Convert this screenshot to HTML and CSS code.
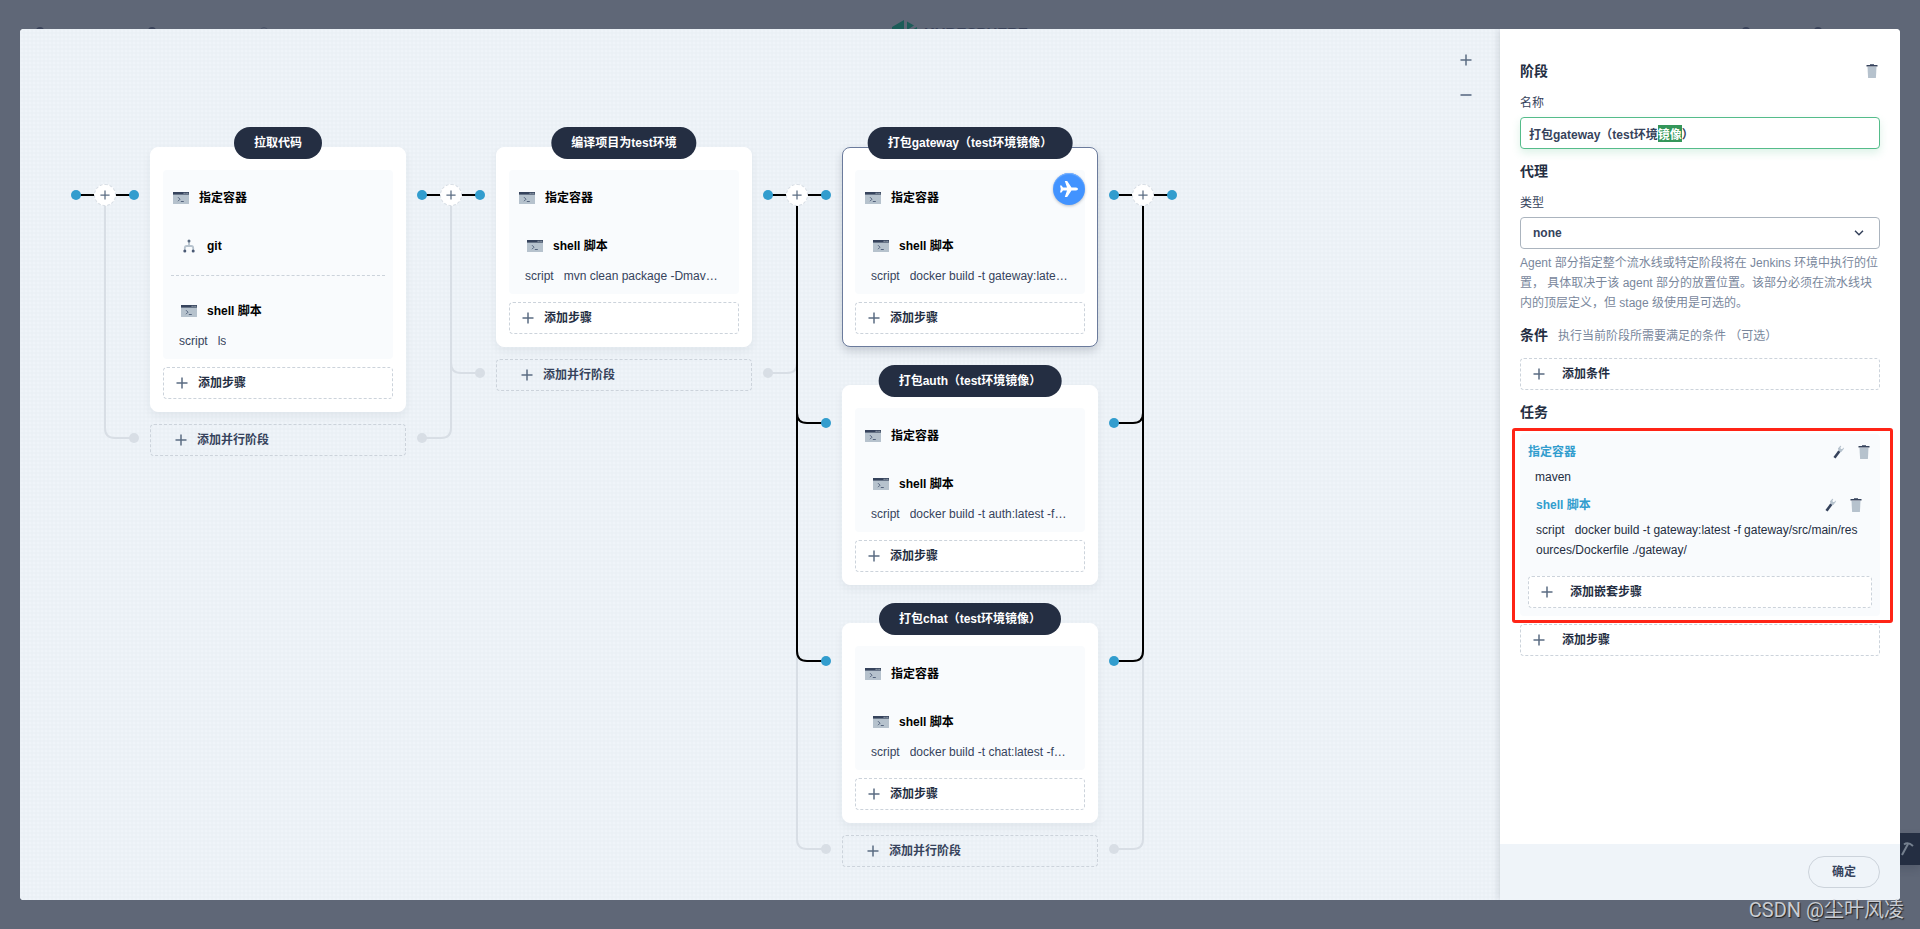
FILE: index.html
```
<!DOCTYPE html>
<html lang="zh-CN">
<head>
<meta charset="utf-8">
<title>流水线编辑</title>
<link rel="stylesheet" href="styles.css">
</head>
<body>
<svg class="defs" aria-hidden="true">
  <symbol id="i-terminal" viewBox="0 0 16 12">
    <rect width="16" height="12" rx="0.5" fill="#b6c2cd"/>
    <rect width="16" height="2.600" fill="#36435c"/>
    <path d="M10.600 1.300h1.100M12.500 1.300h1.100M14.300 1.300h1" stroke="#b6c2cd" stroke-width="1"/>
    <path d="M5 5.200l2 2-2 2M7.800 9.500h3" fill="none" stroke="#4a5974" stroke-width="0.900"/>
  </symbol>
  <symbol id="i-git" viewBox="0 0 12 14">
    <path d="M6 2v5M1.800 12V9Q1.800 7 3.800 7h4.400Q10.200 7 10.200 9v3" fill="none" stroke="#b6c2cd" stroke-width="1.800"/>
    <circle cx="6" cy="2" r="1.500" fill="#5a6b82"/><circle cx="1.800" cy="12" r="1.500" fill="#4a5974"/><circle cx="10.200" cy="12" r="1.500" fill="#4a5974"/>
  </symbol>
  <symbol id="i-plus" viewBox="0 0 12 12"><path d="M6 0.500v11M0.500 6h11" stroke="#5b6c82" stroke-width="1.500"/></symbol>
  <symbol id="i-minus" viewBox="0 0 12 12"><path d="M0.500 6h11" stroke="#79879c" stroke-width="2"/></symbol>
  <symbol id="i-trash" viewBox="0 0 12 14">
    <path d="M1.500 3h9l-.6 11H2.100z" fill="#b6c2cd"/><path d="M.5 1H4V.2h4V1h3.500v1.500H.5z" fill="#36435c"/>
  </symbol>
  <symbol id="i-wrench" viewBox="0 0 12 14">
    <path d="M6.800 6L5.900 3.600 8.300.8 9.300 1 8.300 3l.8 1.100 1.200-.1L11.500 2.400l.4 1.300-2.600 3.200-1.500.4z" fill="#b6c2cd"/>
    <path d="M7.300 6.300L2.500 12.700" stroke="#36435c" stroke-width="2.600"/>
  </symbol>
</svg>

<header class="topbar" aria-hidden="true">
  <div class="topnav"><i class="nub"></i><i class="nub"></i><i class="nub ring"></i></div>
  <div class="brand">
    <svg width="26" height="28" viewBox="0 0 26 28"><path d="M0 7L12 0v14L0 21zM15 1.500l7 4-7 4.500zM25 7v6l-7-2z" fill="#1c5c58"/></svg>
    <span>KUBESPHERE</span>
  </div>
  <div class="topuser"><i class="nub"></i><i class="nub"></i></div>
</header>
<div class="toolbox" aria-hidden="true"><svg width="14" height="16" viewBox="0 0 14 16"><path d="M2 14L8 3" stroke="#75808f" stroke-width="2"/><path d="M4 3.500Q8 .5 13 5" fill="none" stroke="#75808f" stroke-width="2"/></svg></div>

<main class="modal">
  <section class="canvas" aria-label="流水线">
    <div class="zoom">
      <button type="button" aria-label="放大"><svg width="12" height="12"><use href="#i-plus"/></svg></button>
      <button type="button" aria-label="缩小"><svg width="12" height="12"><use href="#i-minus"/></svg></button>
    </div>
    <div class="pipeline">
      <div class="link">
        <svg width="68" height="710">
          <path class="idle" d="M34 59V281Q34 291 44 291H63"/><path class="live" d="M5 48H63"/>
          <circle class="off" cx="63" cy="291" r="5"/><circle class="on" cx="5" cy="48" r="5"/><circle class="on" cx="63" cy="48" r="5"/>
        </svg>
        <button type="button" class="insert" aria-label="添加阶段"><svg width="10" height="10"><use href="#i-plus"/></svg></button>
      </div>

      <div class="lane">
        <article class="stage">
          <h2 class="pill">拉取代码</h2>
          <div class="steps">
            <h3 class="step"><svg width="16" height="12"><use href="#i-terminal"/></svg>指定容器</h3>
            <div class="nested">
              <h3 class="step"><svg class="git" width="12" height="14"><use href="#i-git"/></svg>git</h3>
            </div>
            <div class="nested divided">
              <h3 class="step"><svg width="16" height="12"><use href="#i-terminal"/></svg>shell 脚本</h3>
              <p class="script"><span>script</span><span class="value">ls</span></p>
            </div>
          </div>
          <button type="button" class="add"><svg width="12" height="12"><use href="#i-plus"/></svg>添加步骤</button>
        </article>
        <button type="button" class="add parallel"><svg width="12" height="12"><use href="#i-plus"/></svg>添加并行阶段</button>
      </div>

      <div class="link">
        <svg width="68" height="710">
          <path class="idle" d="M34 59V281Q34 291 24 291H5M34 59V216Q34 226 44 226H63"/><path class="live" d="M5 48H63"/>
          <circle class="off" cx="5" cy="291" r="5"/><circle class="off" cx="63" cy="226" r="5"/><circle class="on" cx="5" cy="48" r="5"/><circle class="on" cx="63" cy="48" r="5"/>
        </svg>
        <button type="button" class="insert" aria-label="添加阶段"><svg width="10" height="10"><use href="#i-plus"/></svg></button>
      </div>

      <div class="lane">
        <article class="stage">
          <h2 class="pill">编译项目为test环境</h2>
          <div class="steps">
            <h3 class="step"><svg width="16" height="12"><use href="#i-terminal"/></svg>指定容器</h3>
            <div class="nested">
              <h3 class="step"><svg width="16" height="12"><use href="#i-terminal"/></svg>shell 脚本</h3>
              <p class="script"><span>script</span><span class="value">mvn clean package -Dmaven.test.skip=true</span></p>
            </div>
          </div>
          <button type="button" class="add"><svg width="12" height="12"><use href="#i-plus"/></svg>添加步骤</button>
        </article>
        <button type="button" class="add parallel"><svg width="12" height="12"><use href="#i-plus"/></svg>添加并行阶段</button>
      </div>

      <div class="link">
        <svg width="68" height="710">
          <path class="idle" d="M34 59V216Q34 226 24 226H5M34 59V692Q34 702 44 702H63"/>
          <path class="live" d="M5 48H63M34 59V266Q34 276 44 276H63M34 59V504Q34 514 44 514H63"/>
          <circle class="off" cx="5" cy="226" r="5"/><circle class="off" cx="63" cy="702" r="5"/><circle class="on" cx="5" cy="48" r="5"/><circle class="on" cx="63" cy="48" r="5"/><circle class="on" cx="63" cy="276" r="5"/><circle class="on" cx="63" cy="514" r="5"/>
        </svg>
        <button type="button" class="insert" aria-label="添加阶段"><svg width="10" height="10"><use href="#i-plus"/></svg></button>
      </div>

      <div class="lane">
        <article class="stage selected">
          <h2 class="pill">打包gateway（test环境镜像）</h2>
          <span class="plane"><svg width="20" height="18" viewBox="0 0 20 18"><path d="M1 5.500h1.500L4 7.500h4L5.800 1h2.400l4.300 6.500H17q2 .3 2 1.500t-2 1.500h-4.500L8.200 17H5.800L8 10.500H4L2.500 12.500H1L1.800 9z" fill="#fff"/></svg></span>
          <div class="steps">
            <h3 class="step"><svg width="16" height="12"><use href="#i-terminal"/></svg>指定容器</h3>
            <div class="nested">
              <h3 class="step"><svg width="16" height="12"><use href="#i-terminal"/></svg>shell 脚本</h3>
              <p class="script"><span>script</span><span class="value">docker build -t gateway:latest -f gateway/src/main/resources/Dockerfile ./gateway/</span></p>
            </div>
          </div>
          <button type="button" class="add"><svg width="12" height="12"><use href="#i-plus"/></svg>添加步骤</button>
        </article>
        <article class="stage">
          <h2 class="pill">打包auth（test环境镜像）</h2>
          <div class="steps">
            <h3 class="step"><svg width="16" height="12"><use href="#i-terminal"/></svg>指定容器</h3>
            <div class="nested">
              <h3 class="step"><svg width="16" height="12"><use href="#i-terminal"/></svg>shell 脚本</h3>
              <p class="script"><span>script</span><span class="value">docker build -t auth:latest -f auth/src/main/resources/Dockerfile ./auth/</span></p>
            </div>
          </div>
          <button type="button" class="add"><svg width="12" height="12"><use href="#i-plus"/></svg>添加步骤</button>
        </article>
        <article class="stage">
          <h2 class="pill">打包chat（test环境镜像）</h2>
          <div class="steps">
            <h3 class="step"><svg width="16" height="12"><use href="#i-terminal"/></svg>指定容器</h3>
            <div class="nested">
              <h3 class="step"><svg width="16" height="12"><use href="#i-terminal"/></svg>shell 脚本</h3>
              <p class="script"><span>script</span><span class="value">docker build -t chat:latest -f chat/src/main/resources/Dockerfile ./chat/</span></p>
            </div>
          </div>
          <button type="button" class="add"><svg width="12" height="12"><use href="#i-plus"/></svg>添加步骤</button>
        </article>
        <button type="button" class="add parallel"><svg width="12" height="12"><use href="#i-plus"/></svg>添加并行阶段</button>
      </div>

      <div class="link">
        <svg width="68" height="710">
          <path class="idle" d="M34 59V692Q34 702 24 702H5"/>
          <path class="live" d="M5 48H63M34 59V266Q34 276 24 276H5M34 59V504Q34 514 24 514H5"/>
          <circle class="off" cx="5" cy="702" r="5"/><circle class="on" cx="5" cy="48" r="5"/><circle class="on" cx="63" cy="48" r="5"/><circle class="on" cx="5" cy="276" r="5"/><circle class="on" cx="5" cy="514" r="5"/>
        </svg>
        <button type="button" class="insert" aria-label="添加阶段"><svg width="10" height="10"><use href="#i-plus"/></svg></button>
      </div>
    </div>
  </section>

  <form class="panel">
    <div class="panel-body">
      <div class="row">
        <h2 class="title">阶段</h2>
        <button type="button" class="icon" aria-label="删除阶段"><svg width="12" height="14"><use href="#i-trash"/></svg></button>
      </div>
      <label class="label" for="name">名称</label>
      <input class="field" id="name" type="text" value="打包gateway（test环境镜像）">
      <h2 class="title">代理</h2>
      <label class="label" for="kind">类型</label>
      <div class="select">
        <select class="field" id="kind"><option>none</option></select>
        <svg width="10" height="6" viewBox="0 0 10 6"><path d="M1 .8l4 4 4-4" fill="none" stroke="#36435c" stroke-width="1.500"/></svg>
      </div>
      <p class="hint">Agent 部分指定整个流水线或特定阶段将在 Jenkins 环境中执行的位置， 具体取决于该 agent 部分的放置位置。该部分必须在流水线块内的顶层定义，但 stage 级使用是可选的。</p>
      <h2 class="title cond">条件<small>执行当前阶段所需要满足的条件 （可选）</small></h2>
      <button type="button" class="add wide"><svg width="12" height="12"><use href="#i-plus"/></svg>添加条件</button>
      <h2 class="title tasks">任务</h2>
      <div class="task">
        <div class="row">
          <a href="#container" class="task-name">指定容器</a>
          <button type="button" class="icon" aria-label="编辑"><svg width="12" height="14"><use href="#i-wrench"/></svg></button>
          <button type="button" class="icon" aria-label="删除"><svg width="12" height="14"><use href="#i-trash"/></svg></button>
        </div>
        <p class="arg">maven</p>
        <div class="subtask">
          <div class="row">
            <a href="#shell" class="task-name">shell 脚本</a>
            <button type="button" class="icon" aria-label="编辑"><svg width="12" height="14"><use href="#i-wrench"/></svg></button>
            <button type="button" class="icon" aria-label="删除"><svg width="12" height="14"><use href="#i-trash"/></svg></button>
          </div>
          <p class="command"><span>script</span>docker build -t gateway:latest -f gateway/src/main/resources/Dockerfile ./gateway/</p>
        </div>
        <button type="button" class="add wide"><svg width="12" height="12"><use href="#i-plus"/></svg>添加嵌套步骤</button>
      </div>
      <button type="button" class="add wide"><svg width="12" height="12"><use href="#i-plus"/></svg>添加步骤</button>
    </div>
    <footer class="panel-foot"><button type="submit" class="ok">确定</button></footer>
  </form>
</main>
<div class="watermark">CSDN @尘叶风凌</div>
<script src="main.js"></script>
</body>
</html>
```

FILE: main.js
```
const nameField = document.getElementById('name');
const start = nameField.value.indexOf('镜像');
nameField.focus();
nameField.setSelectionRange(start, start + 2);
```

FILE: styles.css
```
* { box-sizing: border-box; }
body {
  margin: 0;
  min-height: 100vh;
  padding: 29px 20px;
  background: #5f6777;
  color: #242e42;
  font: 12px/20px "Liberation Sans", "Noto Sans CJK SC", sans-serif;
  position: relative;
}
h2, h3, p { margin: 0; font-size: 12px; }
button, input, select { font: inherit; color: inherit; }
button { cursor: pointer; padding: 0; }
svg { flex: none; display: block; }
.defs { position: absolute; width: 0; height: 0; }

.topbar {
  position: absolute;
  inset: 0 0 auto;
  height: 50px;
  padding: 20px 36px 0;
  display: flex;
  justify-content: space-between;
  align-items: flex-start;
}
.topnav, .topuser { display: flex; gap: 104px; padding-top: 7px; width: 400px; }
.topuser { gap: 64px; justify-content: flex-end; padding-right: 62px; }
.nub { width: 8px; height: 8px; border-radius: 4px; background: #3a435a; }
.ring { background: none; border: 1px solid #4a5368; }
.brand { display: flex; gap: 6px; color: #3a4259; font-size: 15px; font-weight: 700; }
.brand span { padding-top: 3px; }
.toolbox {
  position: absolute;
  right: 0;
  top: 833px;
  width: 28px;
  height: 32px;
  padding: 8px;
  border-radius: 4px 0 0 4px;
  background: #242e42;
  box-shadow: 0 4px 8px rgba(36, 46, 66, .2);
}
.modal {
  position: relative;
  display: flex;
  min-height: calc(100vh - 58px);
  border-radius: 4px;
  overflow: hidden;
  background: #fff;
}

.canvas {
  position: relative;
  flex: 1;
  min-width: 0;
  padding: 98px 51px 33px;
  background-color: #eaf0f5;
  background-image: radial-gradient(circle, #eff4f9 1px, transparent 2px);
  background-size: 4px 4px;
}
.zoom { position: absolute; top: 20px; right: 23px; display: grid; gap: 13px; }
.zoom button { width: 22px; height: 22px; padding: 5px; border: 0; background: none; }
.pipeline { display: flex; align-items: flex-start; gap: 11px; }
.link { position: relative; padding-top: 20px; }
.live, .idle { fill: none; stroke: #000; stroke-width: 2; }
.idle { stroke: #d8dee5; }
.on { fill: #329dce; }
.off { fill: #d8dee5; }
.insert {
  position: absolute;
  top: 57px;
  left: 23px;
  width: 22px;
  height: 22px;
  border: 1px dashed #d8dee5;
  border-radius: 50%;
  background: #fff;
  display: grid;
  place-items: center;
}
.lane { width: 256px; padding-top: 20px; flex: none; }
.stage {
  position: relative;
  padding: 22px 12px 12px;
  border: 1px solid #fff;
  border-radius: 8px;
  background: #fff;
  box-shadow: 0 4px 8px rgba(36, 46, 66, .06);
}
.stage + .stage { margin-top: 38px; }
.selected { border-color: #6b7b9c; box-shadow: 0 4px 8px rgba(36, 46, 66, .2); }
.pill {
  position: absolute;
  top: -21px;
  left: 50%;
  transform: translateX(-50%);
  height: 32px;
  padding: 0 20px;
  border-radius: 18px;
  background: #242e42;
  color: #fff;
  line-height: 32px;
  white-space: nowrap;
}
.plane {
  position: absolute;
  top: 25px;
  right: 12px;
  width: 32px;
  height: 32px;
  border-radius: 50%;
  background: #4293ff;
  box-shadow: 0 1px 3px rgba(36, 46, 66, .3), inset 0 1px 1px #7db4ff;
  display: grid;
  place-items: center;
}
.steps { padding: 18px 8px 8px; border-radius: 4px; background: #f9fbfd; }
.step { display: flex; align-items: center; gap: 10px; padding-left: 2px; color: #000; }
.git { margin: 0 2px; }
.nested { padding: 28px 8px 0; }
.divided { margin-top: 19px; padding-top: 25px; border-top: 1px dashed #ccd3db; }
.script { display: flex; gap: 10px; margin-top: 10px; color: #36435c; }
.value { min-width: 0; overflow: hidden; text-overflow: ellipsis; white-space: nowrap; }
.add {
  display: flex;
  align-items: center;
  gap: 10px;
  width: 100%;
  height: 32px;
  padding: 0 12px;
  border: 1px dashed #ccd3db;
  border-radius: 4px;
  background: none;
  color: #242e42;
  font-weight: 700;
}
.stage .add { margin-top: 8px; }
.parallel { margin-top: 12px; padding: 0 24px; color: #36435c; }
.wide { gap: 17px; background: #fff; }

.panel {
  position: relative;
  width: 400px;
  flex: none;
  display: flex;
  flex-direction: column;
  background: #fff;
  box-shadow: 0 0 8px rgba(36, 46, 66, .2);
}
.panel-body { flex: 1; padding: 32px 20px; }
.row { display: flex; align-items: center; gap: 14px; padding-right: 2px; }
.row > :first-child { flex: 1; }
.icon { width: 12px; height: 14px; border: 0; background: none; }
.title { font-size: 14px; line-height: 20px; }
.label { display: block; margin: 12px 0 4px; color: #36435c; }
.field {
  display: block;
  width: 100%;
  height: 32px;
  padding: 0 8px;
  border: 1px solid #abb4be;
  border-radius: 4px;
  background: #fff;
  color: #36435c;
  font-weight: 700;
  outline: 0;
}
.field:focus { border-color: #55bc8a; box-shadow: 0 4px 8px rgba(85, 188, 138, .2); }
.field::selection { background: rgba(50, 149, 88, .99); color: #fff; }
.field + .title { margin-top: 12px; }
.select { position: relative; }
.select .field { appearance: none; padding: 0 12px; }
.select svg { position: absolute; right: 16px; top: 13px; pointer-events: none; }
.hint { margin-top: 4px; color: #79879c; }
.cond { margin: 12px 0; }
.cond small { margin-left: 10px; color: #79879c; font-size: 12px; font-weight: 400; }
.tasks { margin: 12px 0; }
.task { position: relative; margin-bottom: 8px; padding: 8px; border-radius: 4px; background: #f9fbfd; }
.task::after {
  content: "";
  position: absolute;
  inset: -6px -13px -7px -8px;
  border: 3px solid #ff2416;
  border-radius: 3px;
  pointer-events: none;
}
.task-name { color: #329dce; font-weight: 700; text-decoration: none; }
.arg { margin: 5px 7px 8px; }
.subtask { padding: 0 8px; margin-bottom: 16px; }
.command { margin-top: 5px; word-break: break-all; }
.command span { margin-right: 10px; }
.panel-foot { display: flex; justify-content: flex-end; padding: 12px 20px; background: #eff4f9; }
.ok {
  width: 72px;
  height: 32px;
  border: 1px solid #ccd3db;
  border-radius: 16px;
  background: none;
  color: #36435c;
  font-weight: 700;
}
.watermark {
  position: absolute;
  right: 16px;
  top: 896px;
  color: #c9ccd2;
  font: 20px/28px Roboto, "Noto Sans CJK SC", sans-serif;
  text-shadow: 1px 1px 1px #222;
}
```
